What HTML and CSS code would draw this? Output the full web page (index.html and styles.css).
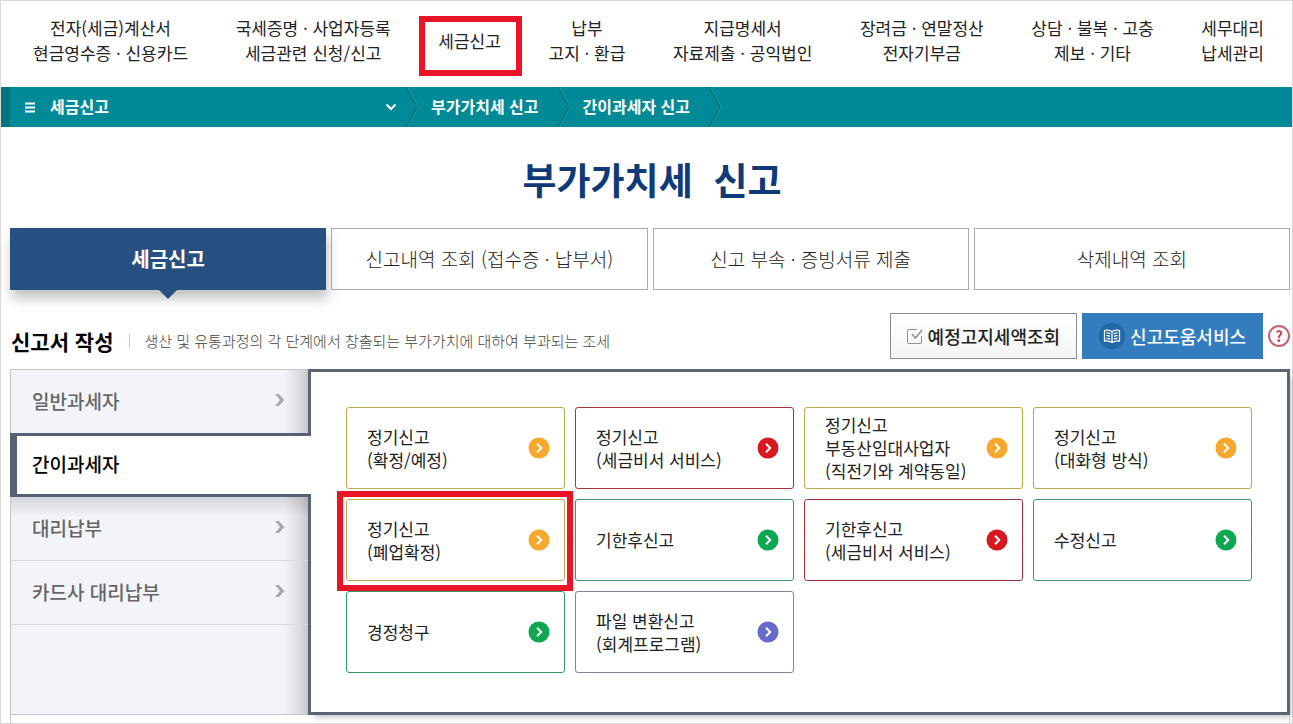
FILE: index.html
```html
<!DOCTYPE html>
<html lang="ko">
<head>
<meta charset="utf-8">
<meta name="viewport" content="width=device-width, initial-scale=1">
<title>부가가치세 신고</title>
<link rel="stylesheet" href="styles.css">
</head>
<body>
<svg class="sprite" aria-hidden="true">
  <symbol id="go" viewBox="0 0 22 22"><circle cx="11" cy="11" r="10.5" fill="currentColor"/><path d="M9 6.800 13.200 11 9 15.200" fill="none" stroke="#fff" stroke-width="2"/></symbol>
  <symbol id="side-arrow" viewBox="0 0 12 14"><path d="M1 1h4l5.500 6L5 13H1l5-6z" fill="#a9a9b4"/></symbol>
  <symbol id="crumb" viewBox="0 0 14 40"><path d="M1 0 12 20 1 40" fill="none" stroke="#00616c" stroke-width="1"/><path d="M2.300 0 13.300 20 2.300 40" fill="none" stroke="#2fa3ae" stroke-width="0.600"/></symbol>
</svg>
<div class="page">
  <nav aria-label="주 메뉴">
    <ul class="menu">
      <li><a href="#">전자(세금)계산서<br>현금영수증 · 신용카드</a></li>
      <li><a href="#">국세증명 · 사업자등록<br>세금관련 신청/신고</a></li>
      <li class="marked"><a href="#">세금신고</a></li>
      <li><a href="#">납부<br>고지 · 환급</a></li>
      <li><a href="#">지급명세서<br>자료제출 · 공익법인</a></li>
      <li><a href="#">장려금 · 연말정산<br>전자기부금</a></li>
      <li><a href="#">상담 · 불복 · 고충<br>제보 · 기타</a></li>
      <li><a href="#">세무대리<br>납세관리</a></li>
    </ul>
  </nav>

  <div class="crumbs">
    <button class="crumb-menu" type="button">
      <svg width="10" height="11" viewBox="0 0 10 11" aria-hidden="true"><path d="M0 1.500h10M0 5.500h10M0 9.500h10" stroke="#fff" stroke-width="2"/></svg>
      <span>세금신고</span>
      <svg class="caret" width="12" height="8" viewBox="0 0 12 8" aria-hidden="true"><path d="m1.500 1.500 4.500 4.500 4.500-4.500" fill="none" stroke="#fff" stroke-width="2"/></svg>
    </button>
    <svg class="sep" aria-hidden="true"><use href="#crumb"/></svg>
    <a href="#">부가가치세 신고</a>
    <svg class="sep" aria-hidden="true"><use href="#crumb"/></svg>
    <a href="#">간이과세자 신고</a>
    <svg class="sep" aria-hidden="true"><use href="#crumb"/></svg>
  </div>

  <main>
    <h1>부가가치세&nbsp; 신고</h1>

    <div class="tabs" role="tablist">
      <button type="button" role="tab" class="tab current" aria-selected="true">세금신고</button>
      <button type="button" role="tab" class="tab" aria-selected="false">신고내역 조회 (접수증 · 납부서)</button>
      <button type="button" role="tab" class="tab" aria-selected="false">신고 부속 · 증빙서류 제출</button>
      <button type="button" role="tab" class="tab" aria-selected="false">삭제내역 조회</button>
    </div>

    <div class="section-head">
      <h2>신고서 작성</h2>
      <p>생산 및 유통과정의 각 단계에서 창출되는 부가가치에 대하여 부과되는 조세</p>
      <div class="tools">
        <button type="button" class="tool">
          <svg width="16" height="16" viewBox="0 0 16 16" fill="none" stroke="#8d8f96" aria-hidden="true"><path d="M10 1.500H2Q.5 1.500.5 3v11q0 1.500 1.500 1.500h11q1.500 0 1.500-1.500V8"/><path d="m5 6 3.500 4L15 2" stroke-width="1.500"/></svg>
          예정고지세액조회
        </button>
        <button type="button" class="tool help-service">
          <svg width="26" height="26" viewBox="0 0 26 26" aria-hidden="true"><circle cx="13" cy="13" r="13" fill="#1f66a5"/><path d="M13 8.500Q9 6.500 5.500 7.500v10.500q4-.8 7.500 1.500 3.500-2.300 7.500-1.500V7.500Q17 6.500 13 8.500zM13 8.500v11" fill="none" stroke="#fff" stroke-width="1.300"/><path d="M7.500 10q2-.2 3.700.7M7.500 12.700q2-.2 3.700.7M7.500 15.400q2-.2 3.700.7M18.500 10q-2-.2-3.700.7M18.500 12.700q-2-.2-3.700.7M18.500 15.400q-2-.2-3.700.7" fill="none" stroke="#fff" stroke-width="1.300"/></svg>
          신고도움서비스
        </button>
        <button type="button" class="question" aria-label="도움말">?</button>
      </div>
    </div>

    <div class="workspace">
      <ul class="side">
        <li><a href="#">일반과세자<svg width="12" height="14" aria-hidden="true"><use href="#side-arrow"/></svg></a></li>
        <li class="active"><a href="#" aria-current="page">간이과세자</a></li>
        <li><a href="#">대리납부<svg width="12" height="14" aria-hidden="true"><use href="#side-arrow"/></svg></a></li>
        <li><a href="#">카드사 대리납부<svg width="12" height="14" aria-hidden="true"><use href="#side-arrow"/></svg></a></li>
      </ul>
      <section class="panel" aria-label="간이과세자 신고">
        <a class="card amber" href="#"><span>정기신고<br>(확정/예정)</span><svg aria-hidden="true"><use href="#go"/></svg></a>
        <a class="card red" href="#"><span>정기신고<br>(세금비서 서비스)</span><svg aria-hidden="true"><use href="#go"/></svg></a>
        <a class="card amber" href="#"><span>정기신고<br>부동산임대사업자<br>(직전기와 계약동일)</span><svg aria-hidden="true"><use href="#go"/></svg></a>
        <a class="card amber" href="#"><span>정기신고<br>(대화형 방식)</span><svg aria-hidden="true"><use href="#go"/></svg></a>
        <a class="card amber marked" href="#"><span>정기신고<br>(폐업확정)</span><svg aria-hidden="true"><use href="#go"/></svg></a>
        <a class="card green" href="#"><span>기한후신고</span><svg aria-hidden="true"><use href="#go"/></svg></a>
        <a class="card red" href="#"><span>기한후신고<br>(세금비서 서비스)</span><svg aria-hidden="true"><use href="#go"/></svg></a>
        <a class="card green" href="#"><span>수정신고</span><svg aria-hidden="true"><use href="#go"/></svg></a>
        <a class="card green" href="#"><span>경정청구</span><svg aria-hidden="true"><use href="#go"/></svg></a>
        <a class="card violet" href="#"><span>파일 변환신고<br>(회계프로그램)</span><svg aria-hidden="true"><use href="#go"/></svg></a>
      </section>
    </div>
    <div class="next-section"></div>
  </main>
</div>
</body>
</html>
```
FILE: styles.css
```css
* {
  box-sizing: border-box;
}

body {
  margin: 0;
  background: #fff;
  color: #222;
  font-family: "Noto Sans CJK KR", sans-serif;
  font-size: 17px;
  line-height: 25px;
  word-break: keep-all;
}

a {
  color: inherit;
  text-decoration: none;
}

button {
  padding: 0;
  border: 0;
  background: none;
  color: inherit;
  font: inherit;
  cursor: pointer;
}

ul,
h1,
h2,
p {
  margin: 0;
  padding: 0;
  list-style: none;
}

.sprite {
  display: none;
}

.page {
  display: flex;
  flex-direction: column;
  min-height: 100vh;
  border: 1px solid #d8d8d8;
}

/* Main menu */
.menu {
  display: flex;
  justify-content: space-between;
  align-items: center;
  padding: 14px 28px 22px 32px;
  text-align: center;
  white-space: nowrap;
}

.menu li {
  position: relative;
}

.menu .marked::after {
  content: "";
  position: absolute;
  inset: -12px -21px -23px -19px;
  border: 6px solid #ea1429;
  pointer-events: none;
}

/* Breadcrumb bar */
.crumbs {
  display: flex;
  align-items: center;
  height: 40px;
  border-left: 9px solid #00747f;
  background: #008a97;
  color: #fff;
  font-size: 16px;
  font-weight: 700;
}

.crumb-menu {
  display: flex;
  align-items: center;
  gap: 15px;
  width: 395px;
  height: 40px;
  padding: 0 8px 0 15px;
}

.caret {
  margin-left: auto;
}

.sep {
  width: 14px;
  height: 40px;
}

.crumbs a {
  padding: 0 18px 2px 12px;
}

.crumb-menu span {
  padding-bottom: 2px;
}

/* Content */
main {
  display: flex;
  flex: 1;
  flex-direction: column;
  padding: 0 2px 0 9px;
}

h1 {
  padding: 28px 0 25px 4px;
  color: #0f3a78;
  font-size: 37px;
  font-weight: 700;
  line-height: 48px;
  text-align: center;
}

.tabs {
  display: grid;
  grid-template-columns: repeat(4, 1fr);
  gap: 5px;
}

.tab {
  position: relative;
  height: 62px;
  padding-bottom: 2px;
  border: 1px solid #aaa;
  font-size: 19px;
  font-weight: 300;
}

.tab.current {
  border-color: #265080;
  background: #265080;
  box-shadow: 2px 8px 12px rgba(0, 0, 0, 0.25);
  color: #fff;
  font-size: 20px;
  font-weight: 700;
}

.tab.current::after {
  content: "";
  position: absolute;
  top: 100%;
  left: 50%;
  margin-left: -10px;
  border: 10px solid transparent;
  border-top-color: #265080;
  border-bottom: 0;
}

.section-head {
  display: flex;
  align-items: center;
  padding: 23px 0 10px;
}

h2 {
  padding: 10px 16px 0 1px;
  color: #000;
  font-size: 21px;
  font-weight: 700;
}

.section-head p {
  margin-top: 8px;
  padding-left: 14px;
  border-left: 1px solid #ccc;
  color: #444;
  font-size: 15px;
  font-weight: 300;
  line-height: 15px;
}

.tools {
  display: flex;
  align-items: center;
  gap: 5px;
  margin-left: auto;
}

.tool {
  display: flex;
  align-items: center;
  gap: 5px;
  height: 46px;
  padding: 0 16px;
  border: 1px solid #8b8d94;
  background: linear-gradient(#fff, #f4f4f4);
  font-size: 18px;
  font-weight: 500;
}

.help-service {
  border-color: #337dbf;
  background: #337dbf;
  color: #fff;
}

.question {
  width: 22px;
  height: 22px;
  border: 2px solid #c9636b;
  border-radius: 50%;
  color: #bd4650;
  font-size: 15px;
  font-weight: 700;
  line-height: 18px;
}

/* Side list and panel */
.workspace {
  display: flex;
  align-items: stretch;
}

.side {
  position: relative;
  width: 298px;
  border: 1px solid #c8c8cc;
  border-right: 0;
  background: linear-gradient(to left, #c6c6ca, #dcdce0 8px, #f2f4fa 24px);
  color: #666;
  font-size: 19px;
  font-weight: 500;
}

.side li {
  height: 64px;
  border-bottom: 1px solid #d8d9de;
}

.side li:first-child {
  height: 63px;
  border-bottom: 0;
}

.side a {
  display: flex;
  align-items: center;
  justify-content: space-between;
  height: 100%;
  padding: 0 22px 3px 21px;
}

.side .active {
  position: relative;
  z-index: 1;
  margin: 0 -3px 0 -1px;
  border: solid #566076;
  border-width: 3px 0 3px 7px;
  background: #fff;
  color: #000;
}

.side .active a {
  padding-left: 15px;
}

.side .active + li {
  background: linear-gradient(rgba(0, 0, 0, 0.12), transparent 20px);
}

.panel {
  display: grid;
  flex: 1;
  grid-template-columns: repeat(4, 1fr);
  grid-auto-rows: 82px;
  align-content: start;
  gap: 10px;
  padding: 35px 35px 39px;
  border: 3px solid #5a6475;
  box-shadow: 4px 5px 6px -3px rgba(0, 0, 0, 0.25);
}

.card {
  position: relative;
  display: flex;
  align-items: center;
  justify-content: space-between;
  padding: 0 14px 0 20px;
  border: 1px solid;
  border-radius: 3px;
  line-height: 23px;
}

.card span {
  padding-bottom: 1px;
  color: #222;
}

.card svg {
  flex: none;
  width: 22px;
  height: 22px;
}

.amber {
  border-color: #bfa84a;
  color: #f7a82d;
}

.red {
  border-color: #a8323c;
  color: #d7191f;
}

.green {
  border-color: #36966a;
  color: #0ca750;
}

.violet {
  border-color: #808498;
  color: #666bc8;
}

.card.marked::after {
  content: "";
  position: absolute;
  z-index: 1;
  inset: -9px -9px -11px -10px;
  border: 6px solid #ea1429;
  pointer-events: none;
}

.next-section {
  flex: 1;
  border: solid #ccc;
  border-width: 0 1px;
}
```
